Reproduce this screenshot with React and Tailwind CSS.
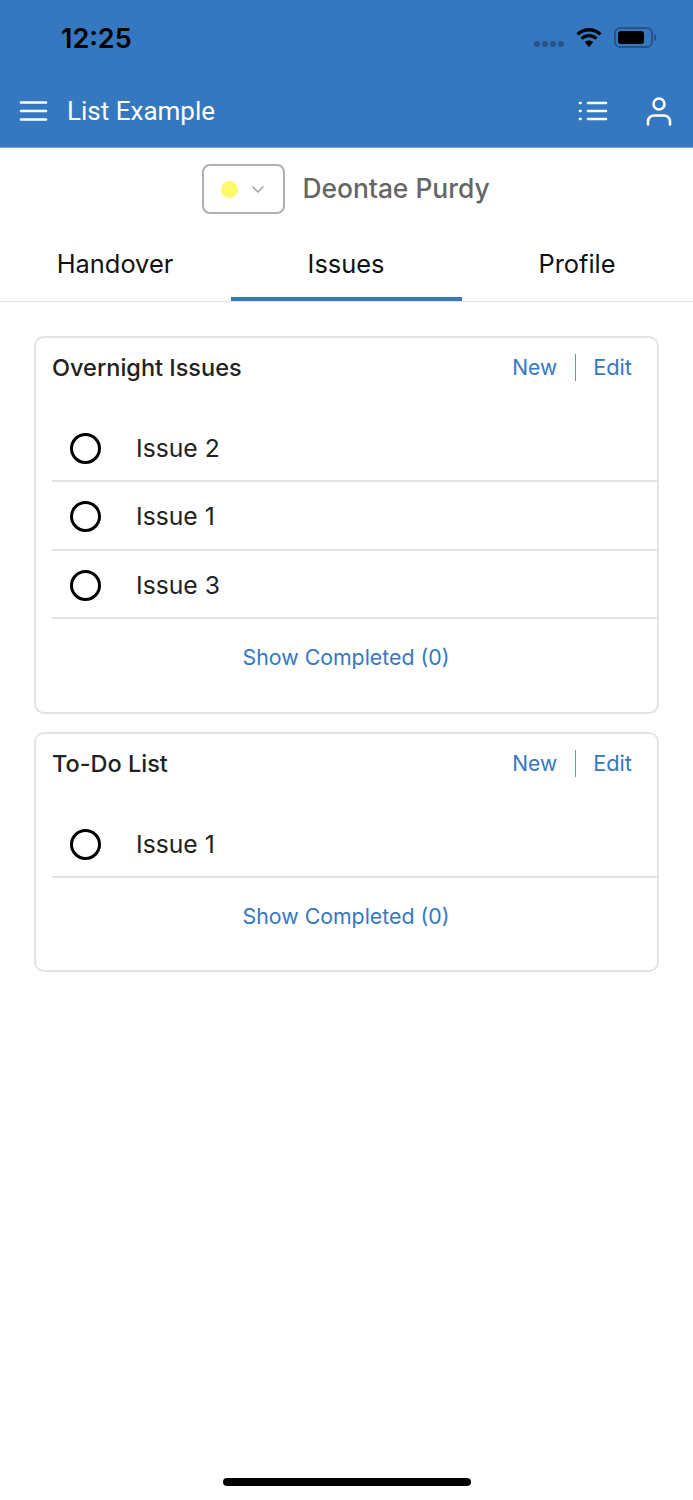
import React from 'react';

const HamburgerIcon = () => (
  <svg width="30" height="22" viewBox="0 0 30 22" fill="none" stroke="white" strokeWidth="2.6" strokeLinecap="round">
    <path d="M2 2.500h25M2 11h25M2 19.500h25" />
  </svg>
);

const ListIcon = () => (
  <svg width="30" height="22" viewBox="0 0 30 22" fill="none" stroke="white" strokeWidth="2.6" strokeLinecap="round">
    <path d="M10 3h18M10 11h18M10 19h18M2 3h.6M2 11h.6M2 19h.6" />
  </svg>
);

const UserIcon = () => (
  <svg width="26" height="29" viewBox="0 0 26 29" fill="none" stroke="white" strokeWidth="2.6" strokeLinecap="round">
    <circle cx="13" cy="7" r="5.500" />
    <path d="M2 27.500v-3a6 6 0 0 1 6-6h10a6 6 0 0 1 6 6v3" />
  </svg>
);

const WifiIcon = () => (
  <svg width="28" height="20" viewBox="0 0 28 20" fill="black">
    <path d="M14 3.600c4 0 7.600 1.500 10.300 4l2.200-2.300C23.200 2.100 18.800.1 14 .1S4.800 2.100 1.500 5.300l2.200 2.300c2.700-2.500 6.300-4 10.300-4z" />
    <path d="M14 9.300c2.400 0 4.600.9 6.300 2.400l2.200-2.300c-2.300-2-5.200-3.300-8.500-3.300S7.800 7.400 5.500 9.400l2.200 2.300c1.700-1.500 3.900-2.400 6.300-2.400z" />
    <path d="M14 12.500c-1.700 0-3.100.6-4.200 1.500l4.200 5.200 4.200-5.200c-1.100-.9-2.500-1.500-4.200-1.500z" />
  </svg>
);

const BatteryIcon = () => (
  <div className="flex items-center gap-[1px]">
    <div className="w-[39px] h-[21px] rounded-[6px] border-2 border-[#24548a] p-[2px]">
      <div className="w-[26px] h-full rounded-[3px] bg-black" />
    </div>
    <div className="w-[2px] h-[7px] rounded-r-sm bg-[#24548a]" />
  </div>
);

const StatusBar = () => (
  <div className="h-[75px] flex items-start justify-between pl-[61px] pr-[37px]">
    <span className='pt-[22px] font-["Inter",sans-serif] font-semibold text-[27px] leading-[34px] text-black'>12:25</span>
    <div className="flex items-center gap-[11px] pt-[27px]">
      <div className="flex gap-[2px] pt-[13px]">
        <span className="w-[6px] h-[6px] rounded-full bg-[#24548a]" />
        <span className="w-[6px] h-[6px] rounded-full bg-[#24548a]" />
        <span className="w-[6px] h-[6px] rounded-full bg-[#24548a]" />
        <span className="w-[6px] h-[6px] rounded-full bg-[#24548a]" />
      </div>
      <WifiIcon />
      <BatteryIcon />
    </div>
  </div>
);

const Header = () => (
  <div className="h-[148px] bg-[#3578c0] border-b border-[#6fa5e0]">
    <StatusBar />
    <div className="h-[72px] flex items-center pl-[19px] pr-[21px]">
      <HamburgerIcon />
      <span className='ml-[18px] font-["Roboto",sans-serif] text-[26px] text-white'>List Example</span>
      <div className="ml-auto flex items-center gap-[38px]">
        <ListIcon />
        <UserIcon />
      </div>
    </div>
  </div>
);

const Tabs = () => {
  const tabs = ['Handover', 'Issues', 'Profile'];
  return (
    <div className="flex h-[70px] border-b border-[#e2e2e2]">
      {tabs.map((tab) => (
        <div
          key={tab}
          className={`flex-1 flex items-center justify-center pb-[1px] font-["Inter",sans-serif] text-[25.400px] text-[#111] border-b-[4px] ${tab === 'Issues' ? 'border-[#3578c0]' : 'border-transparent'}`}
        >
          <span className="-ml-[1px]">{tab}</span>
        </div>
      ))}
    </div>
  );
};

const IssueRow = ({ name }) => (
  <div className="h-[68.500px] flex items-center border-b-2 border-[#e3e3e3] pl-[18px] pt-[2px]">
    <span className="w-[31px] h-[31px] rounded-full border-[3px] border-black" />
    <span className='ml-[35px] font-["Inter",sans-serif] text-[24.700px] text-[#222]'>{name}</span>
  </div>
);

const IssueCard = ({ title, items, cardHeight }) => (
  <div className={`${cardHeight} rounded-[10px] border-2 border-[#e3e3e3] pl-[16px]`}>
    <div className="h-[59px] flex items-center justify-between pr-[25px]">
      <span className='font-["Inter",sans-serif] font-[450] text-[23.500px] text-[#222]'>{title}</span>
      <div className='flex items-center font-["Inter",sans-serif] text-[21px] text-[#3578c0]'>
        <span>New</span>
        <span className="ml-[18px] mr-[17px] w-[1px] h-[27px] bg-[#5b96d4]" />
        <span className="text-[21.800px]">Edit</span>
      </div>
    </div>
    <div className="mt-[16.800px]">
      {items.map((item) => (
        <IssueRow key={item} name={item} />
      ))}
    </div>
    <div className='h-[78px] flex items-center justify-center pr-[16px] font-["Inter",sans-serif] text-[21.300px] text-[#3578c0]'>
      <span className="-ml-[1px]">Show Completed (0)</span>
    </div>
  </div>
);

const App = () => {
  return (
    <div className="w-[693px] h-[1500px] bg-white flex flex-col relative overflow-hidden">
      <Header />

      <div className="h-[84px] shrink-0 flex items-center justify-center">
        <div className="w-[83px] h-[50px] rounded-[8px] border-2 border-[#b0b0b0] flex items-center pl-[17px] -mt-[2px] -ml-[1px]">
          <span className="w-[17px] h-[17px] rounded-full bg-[#fcf96b]" />
          <svg className="ml-[13px]" width="14" height="9" viewBox="0 0 14 9" fill="none" stroke="#a8a8a8" strokeWidth="1.7" strokeLinecap="round" strokeLinejoin="round">
            <path d="M2 2l5 5 5-5" />
          </svg>
        </div>
        <span className='ml-[17px] -mt-[2px] font-["Inter",sans-serif] font-medium text-[26.400px] text-[#666]'>Deontae Purdy</span>
      </div>

      <Tabs />

      <div className="flex flex-col gap-[18px] px-[34px] pt-[34px]">
        <IssueCard title="Overnight Issues" items={['Issue 2', 'Issue 1', 'Issue 3']} cardHeight="h-[378px] shrink-0" />
        <IssueCard title="To-Do List" items={['Issue 1']} cardHeight="h-[240px] shrink-0" />
      </div>

      {/* home indicator */}
      <div className="absolute bottom-[14px] left-[223px] w-[248px] h-[8px] rounded-full bg-black" />
    </div>
  );
};

export default App;
